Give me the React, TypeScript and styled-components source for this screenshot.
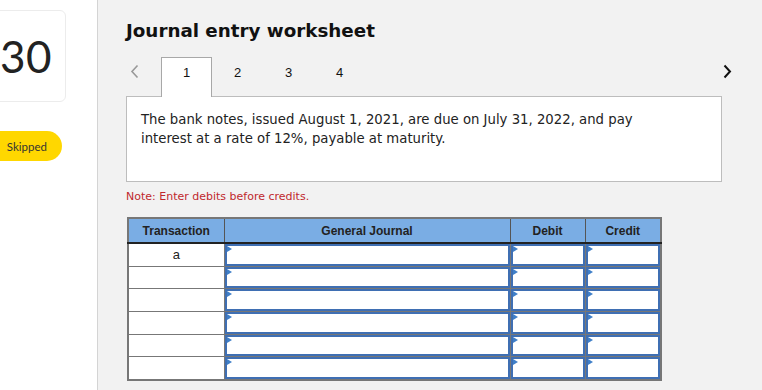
import React from "react";
import styled, { createGlobalStyle } from "styled-components";

const Global = createGlobalStyle`
  html, body { margin: 0; padding: 0; background: #ffffff; }
  #root { width: 762px; height: 390px; overflow: hidden; }
`;

const Page = styled.div`
  display: flex;
  width: 762px;
  height: 390px;
`;

const Side = styled.aside`
  width: 98px;
  flex: none;
  background: #ffffff;
  border-right: 1px solid #d4d4d4;
  overflow: hidden;
  padding-top: 10px;
  box-sizing: border-box;
  display: flex;
  flex-direction: column;
  gap: 29px;
`;

const NumberCard = styled.div`
  width: 100px;
  height: 92px;
  margin-left: -34px;
  border: 1px solid #ececec;
  border-radius: 6px;
  box-sizing: border-box;
  display: flex;
  align-items: center;
  justify-content: flex-end;
  padding-right: 13px;
  font-family: Lato, "Open Sans", sans-serif;
  font-size: 44px;
  color: #222;
  letter-spacing: 0.5px;
`;

const Pill = styled.div`
  width: 96px;
  height: 30px;
  margin-left: -34px;
  background: #ffd700;
  border-radius: 15px;
  display: flex;
  align-items: center;
  justify-content: flex-end;
  padding-right: 15px;
  box-sizing: border-box;
  font-family: Lato, "Open Sans", sans-serif;
  font-size: 11.5px;
  color: #333;
`;

const Main = styled.main`
  flex: 1;
  background: #f2f2f2;
  padding: 19px 40px 0 28px;
  box-sizing: border-box;
`;

const Title = styled.h1`
  margin: 0;
  font-family: "DejaVu Sans", Verdana, sans-serif;
  font-weight: bold;
  font-size: 18.3px;
  color: #111;
  line-height: 24px;
`;

const TabBar = styled.div`
  display: flex;
  align-items: flex-end;
  margin-top: 13px;
  height: 40px;
`;

const Arrow = styled.button<{ $dark?: boolean }>`
  border: 0;
  background: none;
  padding: 8px 0 0 ${(p) => (p.$dark ? "0" : "4px")};
  width: 35px;
  height: 40px;
  box-sizing: border-box;
  display: flex;
  align-items: flex-start;
  justify-content: ${(p) => (p.$dark ? "flex-end" : "flex-start")};
  color: ${(p) => (p.$dark ? "#111" : "#999")};
  margin-left: ${(p) => (p.$dark ? "auto" : "0")};
  margin-right: ${(p) => (p.$dark ? "-10px" : "0")};
  svg { display: block; }
`;

const Tab = styled.div<{ $active?: boolean }>`
  width: 51px;
  height: 40px;
  box-sizing: border-box;
  display: flex;
  align-items: center;
  justify-content: center;
  padding-bottom: 11px;
  font-family: "Liberation Sans", Arial, sans-serif;
  font-size: 13px;
  color: #111;
  background: ${(p) => (p.$active ? "#fff" : "transparent")};
  border: ${(p) => (p.$active ? "1px solid #a8a8a8" : "1px solid transparent")};
  border-bottom: none;
  margin-bottom: -1px;
  position: relative;
  z-index: 1;
`;

const Card = styled.div`
  background: #fff;
  border: 1px solid #bdbdbd;
  height: 86px;
  box-sizing: border-box;
  padding: 13px 14px;
  font-family: "DejaVu Sans", Verdana, sans-serif;
  font-size: 13.25px;
  line-height: 19px;
  color: #222;
`;

const Note = styled.p`
  margin: 8px 0 0;
  font-family: "DejaVu Sans", Verdana, sans-serif;
  font-size: 11px;
  line-height: 14px;
  color: #c0282d;
`;

const Table = styled.table`
  margin: 13px 0 0 1px;
  border-collapse: collapse;
  border: 2px solid #777;
  table-layout: fixed;
  width: 534px;
`;

const Th = styled.th`
  height: 23px;
  padding: 0;
  background: #7aade4;
  border: 1px solid #555;
  border-bottom: 2px solid #222;
  font-family: "Liberation Sans", Arial, sans-serif;
  font-weight: bold;
  font-size: 12px;
  color: #222;
  text-align: center;
`;

const Td = styled.td`
  height: 21.7px;
  padding: 0;
  border: 1px solid #777;
  background: #fff;
  font-family: "Liberation Sans", Arial, sans-serif;
  font-size: 13px;
  color: #222;
  text-align: center;
`;

const InputTd = styled.td`
  height: 21.7px;
  padding: 0;
  border: 1px solid #777;
  background: #fff;
`;

const Field = styled.div`
  height: 21.7px;
  box-sizing: border-box;
  border: 2px solid #3f6fb3;
  background: #fff;
  position: relative;
  &::before {
    content: "";
    position: absolute;
    left: 0;
    top: 0;
    border-left: 5px solid #3f7fc8;
    border-top: 3px solid transparent;
    border-bottom: 3px solid transparent;
  }
`;

const widths = [96, 286, 75, 76];
const rows = ["a", "", "", "", "", ""];

export default function App() {
  return (
    <>
      <Global />
      <Page>
        <Side>
          <NumberCard>30</NumberCard>
          <Pill>Skipped</Pill>
        </Side>
        <Main>
          <Title>Journal entry worksheet</Title>
          <TabBar>
            <Arrow aria-label="previous">
              <svg width="9" height="15" viewBox="0 0 9 15">
                <path d="M7.5 1.5 L2 7.5 L7.5 13.5" fill="none" stroke="currentColor" strokeWidth="1.6" />
              </svg>
            </Arrow>
            <Tab $active>1</Tab>
            <Tab>2</Tab>
            <Tab>3</Tab>
            <Tab>4</Tab>
            <Arrow $dark aria-label="next">
              <svg width="9" height="15" viewBox="0 0 9 15">
                <path d="M1.5 1.5 L7 7.5 L1.5 13.5" fill="none" stroke="currentColor" strokeWidth="2" />
              </svg>
            </Arrow>
          </TabBar>
          <Card>
            The bank notes, issued August 1, 2021, are due on July 31, 2022, and pay
            <br />
            interest at a rate of 12%, payable at maturity.
          </Card>
          <Note>Note: Enter debits before credits.</Note>
          <Table>
            <colgroup>
              {widths.map((w, i) => (
                <col key={i} style={{ width: w }} />
              ))}
            </colgroup>
            <thead>
              <tr>
                <Th>Transaction</Th>
                <Th>General Journal</Th>
                <Th>Debit</Th>
                <Th>Credit</Th>
              </tr>
            </thead>
            <tbody>
              {rows.map((r, i) => (
                <tr key={i}>
                  <Td>{r}</Td>
                  <InputTd><Field /></InputTd>
                  <InputTd><Field /></InputTd>
                  <InputTd><Field /></InputTd>
                </tr>
              ))}
            </tbody>
          </Table>
        </Main>
      </Page>
    </>
  );
}
